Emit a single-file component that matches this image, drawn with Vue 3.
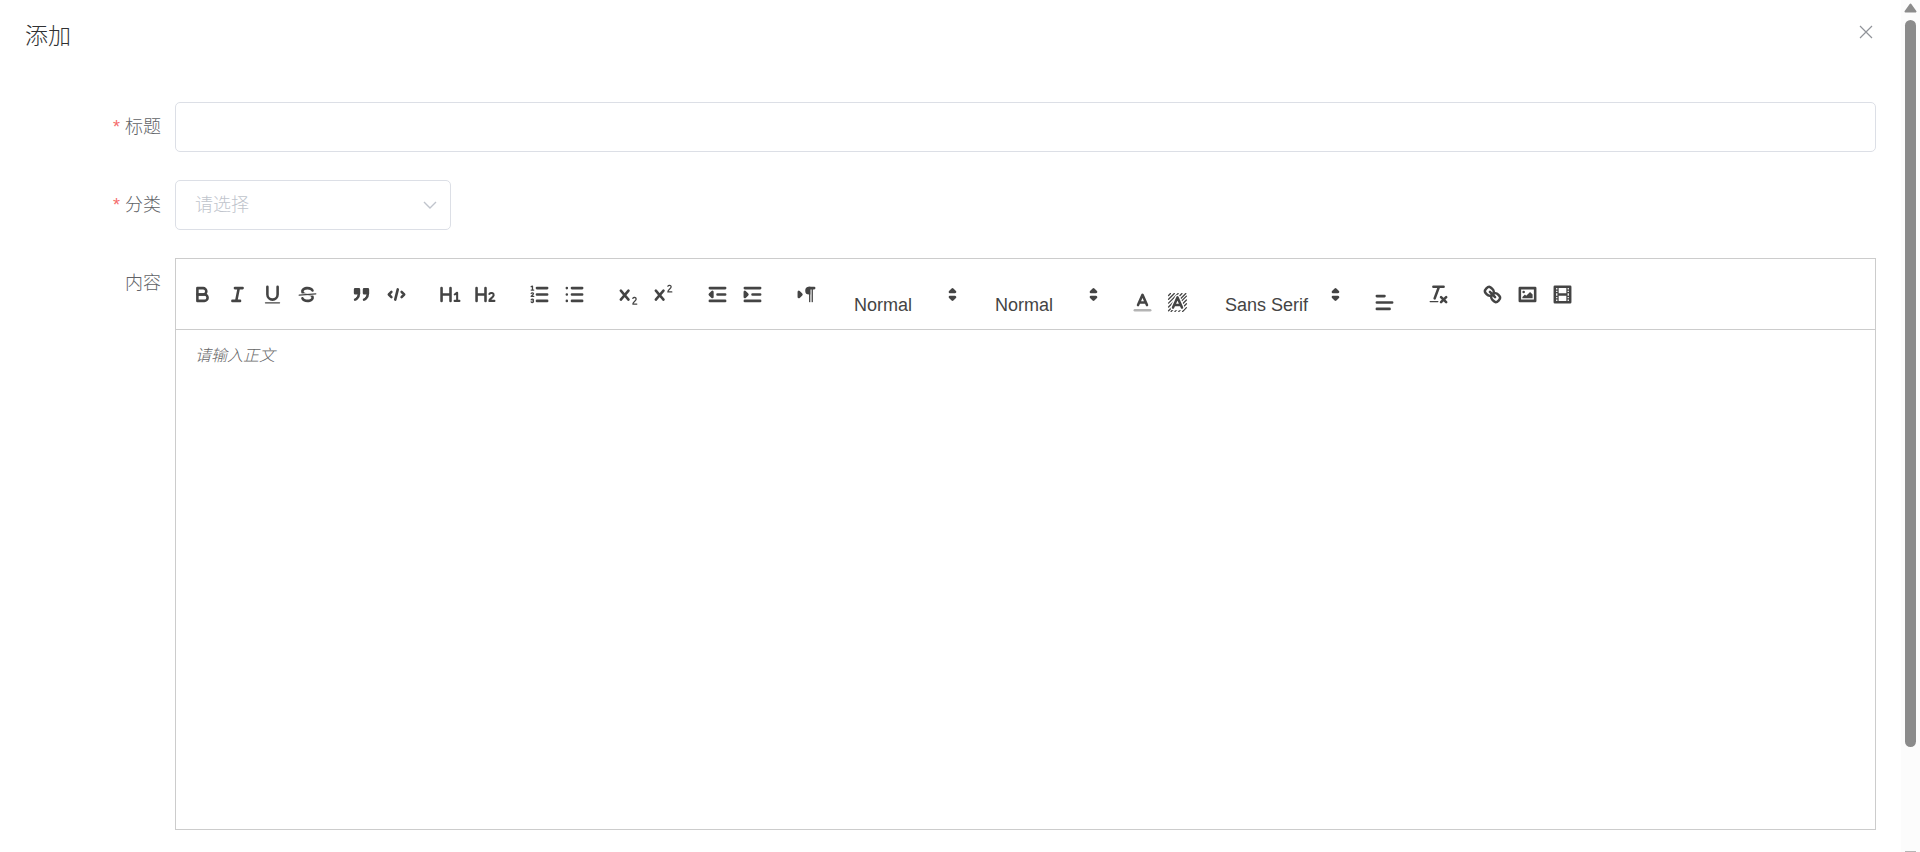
<template>
  <div class="page">
    <main class="dialog">
      <header class="dialog-header">
        <h1 class="dialog-title">添加</h1>
        <button type="button" class="dialog-close" aria-label="关闭">
          <svg viewBox="0 0 14 14"><path d="M1 1L13 13M13 1L1 13" /></svg>
        </button>
      </header>

      <form class="form" @submit.prevent>
        <div class="form-item">
          <label class="form-label required" for="title">标题</label>
          <input id="title" v-model="form.title" class="form-input" type="text" />
        </div>

        <div class="form-item">
          <label class="form-label required" for="category">分类</label>
          <div class="select-wrap">
            <select id="category" v-model="form.category" class="form-input form-select">
              <option value="">请选择</option>
            </select>
            <svg class="select-arrow" viewBox="0 0 14 8"><path d="M1 1L7 7L13 1" /></svg>
          </div>
        </div>

        <div class="form-item">
          <label class="form-label" for="content">内容</label>
          <div class="editor">
            <div class="toolbar">
              <div v-for="(group, index) in toolbar" :key="index" class="formats">
                <template v-for="item in group" :key="item.name">
                  <div v-if="item.text" class="picker" :class="item.name">
                    <select class="picker-select" :aria-label="item.name">
                      <option>{{ item.text }}</option>
                    </select>
                    <svg class="icon picker-arrow" viewBox="0 0 18 18" v-html="icons.arrows"></svg>
                  </div>
                  <button
                    v-else
                    type="button"
                    class="tool"
                    :class="{ 'tool-picker': item.picker }"
                    :aria-label="item.name"
                  >
                    <svg class="icon" viewBox="0 0 18 18" v-html="icons[item.name]"></svg>
                  </button>
                </template>
              </div>
            </div>
            <textarea id="content" v-model="form.content" class="editor-body" placeholder="请输入正文"></textarea>
          </div>
        </div>
      </form>
    </main>

    <div class="scrollbar" aria-hidden="true">
      <svg class="scroll-up" viewBox="0 0 13 10"><path d="M6.500 1.500L11.500 8.500H1.500Z" /></svg>
      <div class="scroll-thumb"></div>
      <div class="scroll-end"></div>
    </div>
  </div>
</template>

<script setup>
import { reactive } from 'vue'

const form = reactive({
  title: '',
  category: '',
  content: ''
})

const toolbar = [
  [{ name: 'bold' }, { name: 'italic' }, { name: 'underline' }, { name: 'strike' }],
  [{ name: 'blockquote' }, { name: 'code' }],
  [{ name: 'header1' }, { name: 'header2' }],
  [{ name: 'ordered' }, { name: 'bullet' }],
  [{ name: 'sub' }, { name: 'super' }],
  [{ name: 'outdent' }, { name: 'indent' }],
  [{ name: 'direction' }],
  [{ name: 'size', text: 'Normal' }],
  [{ name: 'header', text: 'Normal' }],
  [{ name: 'color', picker: true }, { name: 'background', picker: true }],
  [{ name: 'font', text: 'Sans Serif' }],
  [{ name: 'align', picker: true }],
  [{ name: 'clean' }],
  [{ name: 'link' }, { name: 'image' }, { name: 'video' }]
]

// f: 填充, n: 无描边, t: 细线, m: 数字线宽, w: 白色衬底
const icons = {
  bold: '<path d="M5 4H9.500A2.500 2.500 0 0 1 9.500 9H5Z"/><path d="M5 9H10.500A2.500 2.500 0 0 1 10.500 14H5Z"/>',
  italic: '<path d="M7 4H13M5 14H11M8 14L10 4"/>',
  underline: '<path d="M5 3V9a4 4 0 0 0 8 0V3"/><rect class="f n" x="3" y="15" width="12" height="1" rx=".5"/>',
  strike: '<path class="t" d="M15.500 8.500L2.500 9.500"/><path class="f n" d="M9 8C6.500 7.800 6 7.500 6 6.500 6 5.800 7.300 5 9 5c1.600 0 2.800.7 3 1.300a1 1 0 0 0 1.900-.6C13.400 4.100 11.400 3 9 3 6.200 3 4 4.500 4 6.500a3.200 3.200 0 0 0 .5 1.800Z"/><path class="f n" d="M9 10C11.500 10.200 12 10.500 12 11.500c0 .7-1.300 1.500-3 1.500-1.600 0-2.800-.7-3-1.300a1 1 0 1 0-1.900.6C4.600 13.900 6.600 15 9 15c2.800 0 5-1.500 5-3.500a3.200 3.200 0 0 0-.5-1.800Z"/>',
  blockquote: '<rect class="f" x="4" y="5" width="3" height="3"/><rect class="f" x="11" y="5" width="3" height="3"/><path class="f" d="M7 8c0 4-3 5-3 5M14 8c0 4-3 5-3 5"/>',
  code: '<path d="M5 7L3 9L5 11M13 7L15 9L13 11M10 5L8 13"/>',
  header1: '<path d="M2 4V14M9 4V14M2 9H9"/><path class="m" d="M12.300 9L14 7.700H14.200V14M12.200 14H16"/>',
  header2: '<path d="M2 4V14M9 4V14M2 9H9"/><path class="m" d="M12 8.600C13 7.200 15.500 7.700 15.400 9.500C15.300 11.500 12 12.200 12 14H16"/>',
  ordered: '<path d="M7 4H15M7 9H15M7 14H15"/><path class="t" d="M2.500 2.900L3.500 2.500V5.500M2.500 5.500H4.500M4.500 10.500H2.500C2.500 10.200 4.300 9.400 4.300 8.300A1 1 0 0 0 2.500 8.200M2.500 14.800A1 1 0 0 0 4.300 14.700A.7.7 0 0 0 3.700 14A.7.7 0 0 0 4.300 13.300A1 1 0 0 0 2.500 13.200"/>',
  bullet: '<path d="M7 4H15M7 9H15M7 14H15M3 4H3.010M3 9H3.010M3 14H3.010"/>',
  sub: '<path d="M3 6L9 13M9 6L3 13"/><path class="t" d="M12.400 12C13 10.900 15 11.200 15 12.500C15 14 12.500 14.500 12.400 16.500H15.500"/>',
  super: '<path d="M3 6L9 13M9 6L3 13"/><path class="t" d="M12.400 2.500C13 1.400 15 1.700 15 3C15 4.500 12.500 5 12.400 7H15.500"/>',
  outdent: '<path d="M3 14H15M3 4H15M9 9H15"/><path class="f" d="M5 7V11L3 9Z"/>',
  indent: '<path d="M3 14H15M3 4H15M9 9H15"/><path class="f" d="M3 7V11L5 9Z"/>',
  direction: '<path class="f" d="M3 11L5 9L3 7Z"/><path d="M15 4H11"/><path class="f n" d="M11 3a3 3 0 0 0 0 6h1V3Z"/><rect class="f n" x="11" y="4" width="1" height="11"/><rect class="f n" x="13" y="4" width="1" height="11"/>',
  color: '<path opacity=".4" d="M3 15H15"/><path d="M5.500 11L9 3L12.500 11M11.600 9H6.400"/>',
  background: '<path class="t" d="M2 3.500L3.500 2M2 6.500L6.500 2M2 9.500L9.500 2M2 12.500L12.500 2M2 15.500L15.500 2M4 16L16 4M7 16L16 7M10 16L16 10M13 16L16 13"/><path class="w" d="M5.500 13L9 5L12.500 13Z"/><path d="M5.500 13L9 5L12.500 13M11.600 11H6.400"/>',
  arrows: '<path class="f" d="M7 11L9 13L11 11Z"/><path class="f" d="M7 7L9 5L11 7Z"/>',
  align: '<path d="M3 9H15M3 14H13M3 4H9"/>',
  clean: '<path d="M5 3H13M6 12L9.350 3M11 11L15 15M15 11L11 15"/><rect class="f n" x="2" y="14" width="7" height="1" rx=".5"/>',
  link: '<path d="M7 7L11 11"/><path d="M8.900 4.577a3.476 3.476 0 0 1 .36 4.679A3.476 3.476 0 0 1 4.577 8.900C3.185 7.500 2.035 6.400 4.217 4.217S7.500 3.185 8.900 4.577Z"/><path d="M13.423 9.100a3.476 3.476 0 0 0-4.679-.36 3.476 3.476 0 0 0 .36 4.679c1.392 1.392 2.500 2.542 4.679.36S14.815 10.500 13.423 9.100Z"/>',
  image: '<rect x="3" y="4" width="12" height="10"/><circle class="f n" cx="6" cy="7" r="1"/><path class="f n" d="M5 12V11L7 9L8 10L11 7L13 9V12Z"/>',
  video: '<rect x="3" y="3" width="12" height="12"/><path class="f n" d="M5 3h1v12H5ZM12 3h1v12H12ZM5 8H13V10H5ZM3 5h3v1H3ZM3 7h3v1H3ZM3 10h3v1H3ZM3 12h3v1H3ZM12 5h3v1H12ZM12 7h3v1H12ZM12 10h3v1H12ZM12 12h3v1H12Z"/>'
}
</script>

<style>
body {
  margin: 0;
}
</style>

<style scoped>
.page {
  display: flex;
  align-items: flex-start;
  background: #fff;
  font-family: "Liberation Sans", "Noto Sans CJK SC", sans-serif;
  font-size: 18px;
  font-weight: 300;
  color: #606266;
}

.page * {
  box-sizing: border-box;
}

.page input,
.page select,
.page textarea,
.page button {
  margin: 0;
  font-family: inherit;
  font-weight: inherit;
}

.dialog {
  flex: 1;
  min-width: 0;
}

.dialog-header {
  display: flex;
  align-items: flex-start;
  justify-content: space-between;
  padding: 20px 25px 0;
}

.dialog-title {
  margin: 0;
  font-size: 23px;
  font-weight: inherit;
  line-height: 32px;
  color: #303133;
}

.dialog-close {
  display: flex;
  padding: 5px 3px;
  border: none;
  background: none;
  cursor: pointer;
}

.dialog-close svg {
  width: 14px;
  height: 14px;
  fill: none;
  stroke: #909399;
  stroke-width: 1.2;
}

.form {
  display: flex;
  flex-direction: column;
  gap: 28px;
  padding: 50px 25px 22px;
}

.form-item {
  display: flex;
  align-items: flex-start;
}

.form-label {
  width: 150px;
  flex-shrink: 0;
  padding-right: 14px;
  line-height: 50px;
  text-align: right;
}

.form-label.required::before {
  content: "*";
  margin-right: 5px;
  color: #f56c6c;
}

.form-input {
  width: 100%;
  height: 50px;
  padding: 0 19px;
  border: 1px solid #dcdfe6;
  border-radius: 5px;
  background: #fff;
  font-size: 18px;
  color: #606266;
  outline: none;
}

.select-wrap {
  position: relative;
  width: 276px;
}

.form-select {
  appearance: none;
  color: #c0c4cc;
}

.select-arrow {
  position: absolute;
  top: 21px;
  right: 14px;
  width: 14px;
  height: 8px;
  fill: none;
  stroke: #c0c4cc;
  stroke-width: 1.4;
  pointer-events: none;
}

.editor {
  flex: 1;
  min-width: 0;
  border: 1px solid #ccc;
}

.toolbar {
  display: flex;
  flex-wrap: wrap;
  padding: 10px 9px;
  border-bottom: 1px solid #ccc;
}

.formats {
  display: flex;
  align-items: center;
  height: 50px;
  margin-right: 19px;
}

.tool {
  width: 35px;
  height: 30px;
  padding: 3px 6px;
  border: none;
  background: none;
  cursor: pointer;
}

.tool-picker {
  height: 46px;
  padding-top: 19px;
}

.icon {
  display: block;
  width: 23px;
  height: 23px;
  fill: none;
  stroke: #444;
  stroke-width: 2;
  stroke-linecap: round;
  stroke-linejoin: round;
}

.icon :deep(.f) {
  fill: #444;
}

.icon :deep(.n) {
  stroke: none;
}

.icon :deep(.t) {
  stroke-width: 1;
}

.icon :deep(.m) {
  stroke-width: 1.6;
}

.icon :deep(.w) {
  fill: #fff;
  stroke: #fff;
  stroke-width: 4;
}

.picker {
  position: relative;
  width: 122px;
}

.picker.font {
  width: 134px;
}

.picker-select {
  display: block;
  width: 100%;
  height: 50px;
  padding: 22px 24px 0 11px;
  border: none;
  background: none;
  appearance: none;
  font-size: 18px;
  color: #444;
  outline: none;
}

.picker-arrow {
  position: absolute;
  top: 14px;
  right: 1px;
  pointer-events: none;
}

.editor-body {
  display: block;
  width: 100%;
  min-height: 499px;
  padding: 14px 19px;
  border: none;
  font-size: 16px;
  line-height: 23px;
  color: #444;
  resize: none;
  outline: none;
}

.editor-body::placeholder {
  color: #666;
  font-style: italic;
}

.scrollbar {
  position: sticky;
  top: 0;
  display: flex;
  flex-direction: column;
  align-items: center;
  width: 19px;
  height: 100vh;
  padding-top: 3px;
  background: #fcfcfc;
}

.scroll-up {
  width: 13px;
  height: 10px;
  flex-shrink: 0;
  margin-bottom: 7px;
  fill: #8b8b8b;
  stroke: #8b8b8b;
  stroke-width: 2;
  stroke-linejoin: round;
}

.scroll-thumb {
  width: 11px;
  height: 85.6%;
  border-radius: 6px;
  background: #8b8b8b;
}

.scroll-end {
  width: 11px;
  height: 1px;
  margin-top: auto;
  background: #b5b5b5;
}
</style>
